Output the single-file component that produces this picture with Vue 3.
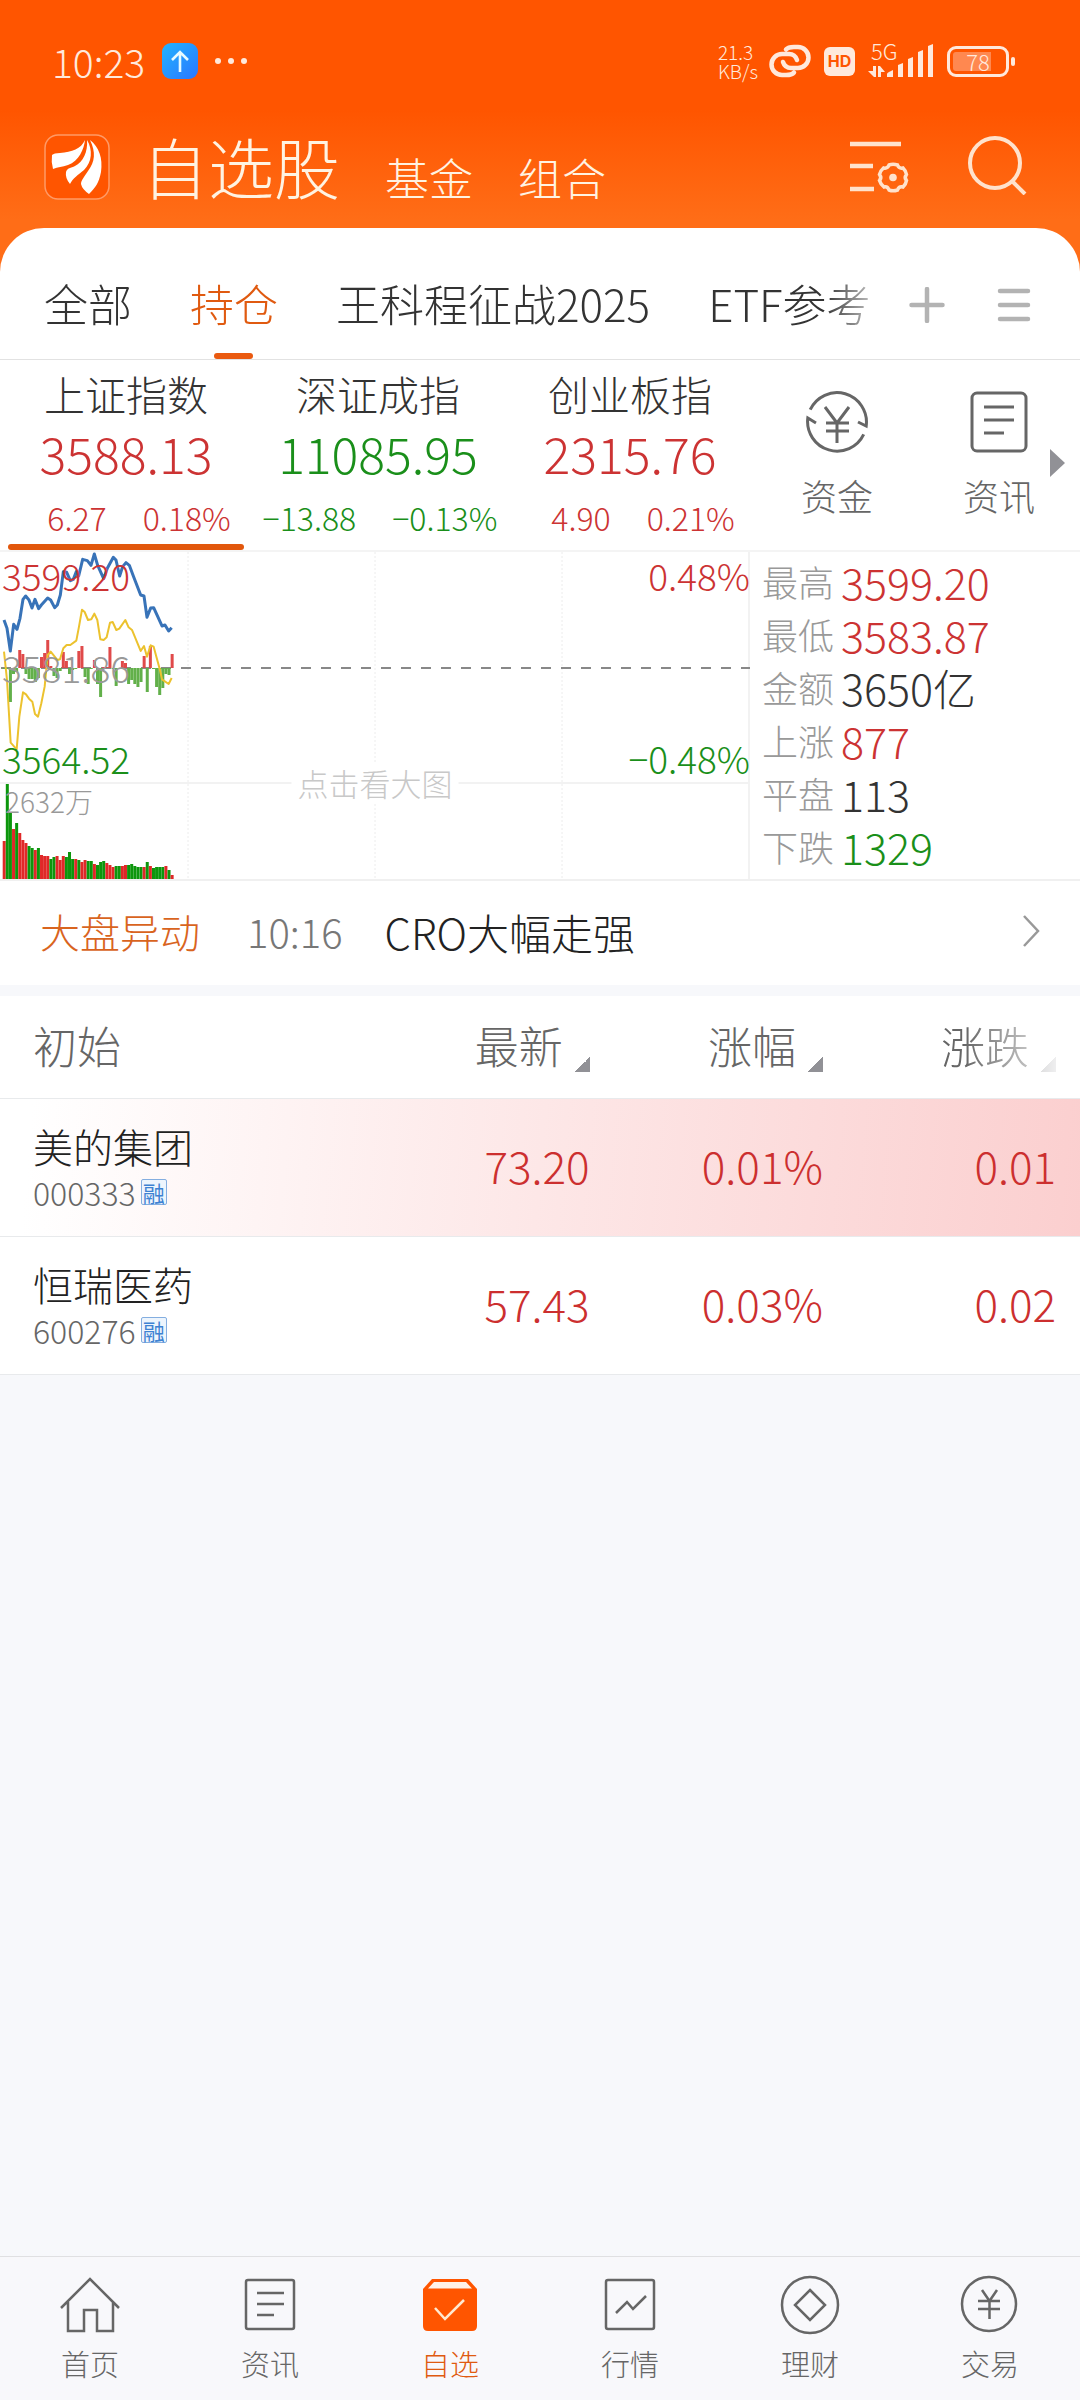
<template>
  <div class="app">
    <header class="top">
      <div class="status">
        <span class="clock">10:23</span>
        <span class="upload">
          <svg viewBox="0 0 36 36" width="36" height="36">
            <path d="M18 29V9M10 17l8-8 8 8" fill="none" stroke="#e8fbff" stroke-width="2.6" />
          </svg>
        </span>
        <span class="dots"><i></i><i></i><i></i></span>
        <span class="speed">21.3<br />KB/s</span>
        <svg class="link" viewBox="0 0 42 34" width="42" height="34">
          <g fill="none" stroke="#ffe9dc" stroke-width="4.5" stroke-linecap="round">
            <path d="M17 5.500Q19 3 25 3H29A10.500 10.500 0 0 1 29 24H22Q16 24 14 18" />
            <path d="M25 28.500Q23 31 17 31H13A10.500 10.500 0 0 1 13 10H20Q26 10 28 16" />
          </g>
        </svg>
        <span class="hd">HD</span>
        <span class="signal">
          <span class="net">5G</span>
          <svg viewBox="0 0 66 34" width="66" height="34">
            <g fill="#ffe9dc">
              <path d="M5 22h3v11H6L0 27h5zM10 33V22h2l5 6h-4v5z" />
              <path d="M19 33v-3q0-1 2-2l4-2v7zM30 21l5-2v14h-5zM40 15l5-2v20h-5zM50 8l5-2v27h-5zM60 2l5-2v33h-5z" />
            </g>
          </svg>
        </span>
        <span class="battery"><span>78</span></span>
      </div>
      <div class="titlebar">
        <svg class="logo" viewBox="0 0 66 66" width="66" height="66">
          <rect x="1" y="1" width="64" height="64" rx="13" fill="#ff5500" stroke="#ff9a66" stroke-width="1.500" />
          <path
            d="M41 6C40 15 35 27 24 31C18 33 14 33 9 35Q7 28 8 21Q10 19 16 19C28 18 37 15 41 6Z"
            fill="#fff"
          />
          <path
            d="M43 6C49 16 48 28 40 36C34 41 29 44 26 50Q21 44 22 38C23 34 27 34 31 32C39 28 44 18 43 6Z"
            fill="#fff"
          />
          <path
            d="M46 6C55 13 59 24 57 38C55 49 51 54 45 60Q38 55 37 50C37 46 41 42 44 37C51 28 52 18 46 6Z"
            fill="#fff"
          />
        </svg>
        <h1>自选股</h1>
        <a href="#fund">基金</a>
        <a href="#group">组合</a>
        <button class="settings" aria-label="列表设置">
          <svg viewBox="0 0 60 56" width="60" height="56">
            <g fill="none" stroke="#ffe2cc" stroke-width="4.500">
              <path d="M0 5H51M0 27H23M0 50H24" />
              <path
                d="M56.500 35.500Q54 38.500 56.500 41.500Q56 45 53 48Q49 47 47.500 51Q43 52.500 39 51Q37.500 47 34 48Q30.500 45 29.500 41.500Q32 38.500 29.500 35.500Q30.500 31.500 33.500 29Q37.500 30 39 26Q43 24.500 47.500 26Q49 30 53 29Q56 32 56.500 35.500Z"
                stroke-width="3.500"
              />
            </g>
            <circle cx="43" cy="38.500" r="3.800" fill="#ffe2cc" />
          </svg>
        </button>
        <button class="search" aria-label="搜索">
          <svg viewBox="0 0 60 60" width="60" height="60">
            <g fill="none" stroke="#ffe2cc" stroke-width="4">
              <circle cx="27" cy="28" r="25" />
              <path d="M44 46L57 59" />
            </g>
          </svg>
        </button>
      </div>
    </header>

    <main>
      <div class="tabs">
        <div class="tab-list">
          <button
            v-for="tab in tabs"
            :key="tab"
            :class="{ active: tab === activeTab }"
            @click="activeTab = tab"
          >
            {{ tab }}
          </button>
        </div>
        <div class="tab-actions">
          <button aria-label="添加">
            <svg viewBox="0 0 36 36" width="36" height="36">
              <path d="M2.500 18H33.500M18 2V34" stroke="#b3b3b3" stroke-width="4.500" stroke-linecap="round" />
            </svg>
          </button>
          <button aria-label="菜单">
            <svg viewBox="0 0 34 36" width="34" height="36">
              <path d="M3 4H31M3 18H31M3 32H31" stroke="#b3b3b3" stroke-width="4.500" stroke-linecap="round" />
            </svg>
          </button>
        </div>
      </div>

      <section class="indices">
        <button
          v-for="item in indices"
          :key="item.name"
          class="index"
          :class="{ active: item.name === activeIndex }"
          @click="activeIndex = item.name"
        >
          <span class="name">{{ item.name }}</span>
          <span class="price" :class="item.dir">{{ item.price }}</span>
          <span class="change" :class="item.dir">
            <span>{{ item.change }}</span>
            <span>{{ item.percent }}</span>
          </span>
        </button>
        <a class="quick" href="#money">
          <svg viewBox="0 0 62 62" width="62" height="62">
            <g fill="none" stroke="#666" stroke-width="3">
              <path d="M4.200 18.700A29.500 29.500 0 0 1 60.200 35L52 31M57.700 43.300A29.500 29.500 0 0 1 1.800 27L10 32" />
              <path d="M19 16L31 32L43 16M31 32V52M20 32H43M20 40H43" />
            </g>
          </svg>
          资金
        </a>
        <a class="quick" href="#news">
          <svg viewBox="0 0 62 62" width="62" height="62">
            <rect x="4" y="2" width="54" height="58" rx="5" fill="none" stroke="#666" stroke-width="3" />
            <path d="M16 16H46M16 29H46M16 42H36" stroke="#666" stroke-width="3" />
          </svg>
          资讯
        </a>
        <i class="more"></i>
      </section>

      <section class="market">
        <div class="chart">
          <svg viewBox="0 0 750 327">
            <g stroke="#f2f2f2" stroke-width="2">
              <path d="M0 231H750M749 0V327" />
            </g>
            <path d="M188 0V327M375 0V327M562 0V327" stroke="#ececec" stroke-dasharray="2 2" />
            <path d="M1 116H750" stroke="#888" stroke-width="2" stroke-dasharray="10 10" />
            <rect
              v-for="(h, i) in momentum"
              :key="'m' + i"
              :x="barX(i)"
              :y="h > 0 ? 116 - h : 116"
              width="3"
              :height="Math.abs(h)"
              :fill="h > 0 ? '#e04a4a' : '#62b04a'"
            />
            <rect
              v-for="(v, i) in volumes"
              :key="'v' + i"
              :x="barX(i)"
              :y="327 - Math.abs(v)"
              width="3"
              :height="Math.abs(v)"
              :fill="v > 0 ? '#e02828' : '#0c960c'"
            />
            <g transform="translate(0 -12) scale(0.3333)" fill="none" stroke-linejoin="round">
              <polyline :points="averageLine" stroke="#ecc22e" stroke-width="6" />
              <polyline :points="priceLine" stroke="#3873b8" stroke-width="9" />
            </g>
          </svg>
          <span class="label high up">3599.20</span>
          <span class="label middle">3581.86</span>
          <span class="label low down">3564.52</span>
          <span class="label high right up">0.48%</span>
          <span class="label low right down">−0.48%</span>
          <span class="label volume">2632万</span>
          <button class="enlarge">点击看大图</button>
        </div>
        <dl class="stats">
          <div v-for="stat in stats" :key="stat.label">
            <dt>{{ stat.label }}</dt>
            <dd :class="stat.dir">{{ stat.value }}</dd>
          </div>
        </dl>
      </section>

      <a class="alert" href="#alert">
        <strong>大盘异动</strong>
        <time>10:16</time>
        <span>CRO大幅走强</span>
        <svg viewBox="0 0 18 32" width="18" height="32">
          <path d="M2 1L16 16L2 31" fill="none" stroke="#999" stroke-width="2.500" />
        </svg>
      </a>

      <table class="stocks">
        <thead>
          <tr>
            <th>初始</th>
            <th v-for="col in columns" :key="col">
              <button>{{ col }}<i></i></button>
            </th>
          </tr>
        </thead>
        <tbody>
          <tr v-for="stock in stocks" :key="stock.code" :class="{ flash: stock.flash }">
            <td>
              <div class="stock-name">{{ stock.name }}</div>
              <div class="stock-code">{{ stock.code }}<span class="badge">融</span></div>
            </td>
            <td>{{ stock.price }}</td>
            <td>{{ stock.percent }}</td>
            <td>{{ stock.change }}</td>
          </tr>
        </tbody>
      </table>
    </main>

    <nav class="bottom">
      <a href="#home">
        <svg viewBox="0 0 60 60" width="60" height="60">
          <path d="M1 33L30 4L59 33M8 27V56H24V35H37V56H53V27" />
        </svg>
        首页
      </a>
      <a href="#news">
        <svg viewBox="0 0 60 60" width="60" height="60">
          <rect x="6" y="5" width="48" height="49" rx="2" />
          <path d="M17 18H44M17 29H44M17 40H34" />
        </svg>
        资讯
      </a>
      <a href="#watchlist" class="active">
        <svg viewBox="0 0 60 60" width="60" height="60">
          <path class="solid" d="M3 14L12 4H48L57 14V51Q57 56 52 56H8Q3 56 3 51Z" />
          <path class="lid" d="M14 7H46L52 13.500H8Z" />
          <path class="tick" d="M15 33L25 44L44 25" />
        </svg>
        自选
      </a>
      <a href="#quotes">
        <svg viewBox="0 0 60 60" width="60" height="60">
          <rect x="6" y="5" width="48" height="49" rx="2" />
          <path d="M16 38L27 27L33 34L46 21" />
        </svg>
        行情
      </a>
      <a href="#wealth">
        <svg viewBox="0 0 60 60" width="60" height="60">
          <circle cx="30" cy="30" r="28" />
          <path d="M30 15L45 30L30 45L15 30Z" />
        </svg>
        理财
      </a>
      <a href="#trade">
        <svg viewBox="0 0 60 60" width="60" height="60">
          <circle cx="29" cy="29" r="27" />
          <path d="M22 15L29.500 26L37 15M29.500 26V44M18 26H40M18 34H40" />
        </svg>
        交易
      </a>
    </nav>
  </div>
</template>

<script setup>
import { ref } from "vue";

const tabs = ["全部", "持仓", "王科程征战2025", "ETF参考"];
const activeTab = ref("持仓");

const indices = [
  { name: "上证指数", price: "3588.13", change: "6.27", percent: "0.18%", dir: "up" },
  { name: "深证成指", price: "11085.95", change: "−13.88", percent: "−0.13%", dir: "down" },
  { name: "创业板指", price: "2315.76", change: "4.90", percent: "0.21%", dir: "up" },
];
const activeIndex = ref("上证指数");

const stats = [
  { label: "最高", value: "3599.20", dir: "up" },
  { label: "最低", value: "3583.87", dir: "up" },
  { label: "金额", value: "3650亿", dir: "" },
  { label: "上涨", value: "877", dir: "up" },
  { label: "平盘", value: "113", dir: "" },
  { label: "下跌", value: "1329", dir: "down" },
];

const columns = ["最新", "涨幅", "涨跌"];
const stocks = [
  { name: "美的集团", code: "000333", price: "73.20", percent: "0.01%", change: "0.01", flash: true },
  { name: "恒瑞医药", code: "600276", price: "57.43", percent: "0.03%", change: "0.02", flash: false },
];

// positive is drawn red, negative green
const momentum = [
  -1, -1, -34, -6, -4, 18, 14, -6, -11, -11, -14, -10, 11, 15, 28, 2, -8, -10, -3, 16, 7, -6, -2,
  -1, 17, 22, -9, -16, -1, 8, -16, -29, 1, 1, 21, -1, -18, -1, 7, 5, -16, -12, -16, -19, -14, 12,
  -24, 22, -1, -19, -27, -20, -6, -7, 14,
];
const volumes = [
  38, -95, -66, 50, -56, 46, 39, 36, -33, -31, 29, -31, 24, 23, 23, -20, -22, 23, 19, 23, -22, -27,
  -20, 20, -19, 17, 19, -18, -18, 15, -14, -17, -18, 16, 14, 12, -13, -13, 13, 14, -14, -15, -13,
  -12, -12, 12, -17, 13, -11, -12, -12, -12, 13, -9, 4,
];
const barX = (i) => (2.7 + i * 3.11).toFixed(2);

const priceLine =
  "12,240 21,265 31,333 41,253 51,268 60,235 69,178 77,168 87,180 96,204 105,178 116,206 124,195 143,174 152,180 164,203 172,195 181,165 190,95 200,97 211,122 220,118 229,95 236,108 248,58 262,62 273,76 283,42 293,76 311,116 322,85 340,52 348,60 359,108 368,80 378,68 388,76 400,108 422,165 432,168 441,232 452,204 461,203 486,258 495,255 506,273 515,263";
const averageLine =
  "12,335 21,420 32,608 50,628 58,530 69,457 78,463 87,476 97,485 105,522 114,530 124,490 134,440 143,345 152,335 172,360 180,358 190,325 200,315 211,315 229,302 237,260 246,209 254,216 264,240 274,238 283,221 292,240 301,298 311,300 320,292 330,248 338,246 349,270 358,266 376,240 386,262 396,270 422,333 432,318 441,350 452,316 461,320 480,390 486,418 506,432 515,414";
</script>

<style>
body {
  margin: 0;
  background: #f7f8fb;
}
</style>

<style scoped>
.app {
  display: flex;
  flex-direction: column;
  min-height: 100vh;
  font-family: "Noto Sans CJK SC", "Noto Sans", sans-serif;
  font-weight: 300;
  color: #333;
  background: #f7f8fb;
}

button {
  padding: 0;
  border: 0;
  background: none;
  font: inherit;
  color: inherit;
  white-space: nowrap;
}

a {
  color: inherit;
  text-decoration: none;
}

svg {
  display: block;
}

.up {
  color: #cc3333;
}

.down {
  color: #1a8f1a;
}

/* header */
.top {
  padding-bottom: 48px;
  margin-bottom: -48px;
  background: linear-gradient(#ff5500 0, #ff5500 110px, #ff6d17 220px);
}

.status {
  display: flex;
  align-items: center;
  height: 122px;
  padding: 0 71px 0 52px;
  color: #ffe9dc;
}

.clock {
  font-size: 39px;
  line-height: 40px;
}

.upload {
  margin-left: 17px;
  border-radius: 9px;
  background: linear-gradient(135deg, #22b4ff, #2a76ff);
}

.dots {
  display: flex;
  gap: 7px;
  margin-left: 17px;
}

.dots i {
  width: 6px;
  height: 6px;
  border-radius: 50%;
  background: #ffe9dc;
}

.speed {
  margin-left: auto;
  font-size: 19px;
  line-height: 19px;
}

.link {
  margin-left: 11px;
}

.hd {
  width: 31px;
  margin-left: 13px;
  border-radius: 6px;
  background: #ffe9dc;
  color: #ff5500;
  font: bold 16px/29px Inter, sans-serif;
  text-align: center;
}

.signal {
  position: relative;
  margin-left: 13px;
}

.net {
  position: absolute;
  top: -6px;
  left: 3px;
  font-size: 22px;
  line-height: 24px;
}

.battery {
  position: relative;
  width: 56px;
  margin-left: 13px;
  border: 3px solid #ffe9dc;
  border-radius: 9px;
  font-size: 22px;
  line-height: 25px;
  text-align: center;
}

.battery::after {
  content: "";
  position: absolute;
  top: 8px;
  right: -9px;
  width: 4px;
  height: 9px;
  border-radius: 2px;
  background: #ffe9dc;
}

.battery span {
  display: block;
  margin: 3px;
  line-height: 19px;
  background: linear-gradient(90deg, #ff8850 76%, transparent 76%);
  border-radius: 3px;
}

.titlebar {
  display: flex;
  align-items: flex-end;
  height: 78px;
  padding: 0 52px 28px 44px;
  color: #fff3e2;
}

.titlebar h1 {
  margin: 0 0 0 32px;
  font-size: 66px;
  font-weight: 300;
  line-height: 70px;
}

.titlebar a {
  margin-left: 45px;
  font-size: 44px;
  line-height: 46px;
}

.titlebar button {
  margin-bottom: 5px;
}

.titlebar .settings {
  margin-left: auto;
}

.titlebar .search {
  margin-left: 58px;
}

/* tabs */
main {
  background: #fff;
  border-radius: 44px 44px 0 0;
}

.tabs {
  display: flex;
  border-bottom: 1px solid #e2e2e2;
}

.tab-list {
  display: flex;
  flex: 1;
  gap: 58px;
  min-width: 0;
  padding-left: 44px;
  overflow: hidden;
  mask-image: linear-gradient(90deg, #000 calc(100% - 52px), rgba(0, 0, 0, 0.25));
}

.tab-list button {
  position: relative;
  padding: 53px 0 34px;
  font-size: 44px;
  line-height: 44px;
}

.tab-list .active {
  color: #e05a10;
}

.tab-list .active::after {
  content: "";
  position: absolute;
  bottom: 0;
  left: 50%;
  width: 39px;
  height: 6px;
  margin-left: -20px;
  border-radius: 3px;
  background: #ea5a10;
}

.tab-actions {
  display: flex;
  padding: 22px 23px 0 7px;
}

.tab-actions button {
  display: flex;
  align-items: center;
  justify-content: center;
  width: 87px;
}

/* indices */
.indices {
  position: relative;
  display: grid;
  grid-template-columns: 252fr 252fr 252fr 162fr 162fr;
  border-bottom: 2px solid #f4f4f4;
}

.index {
  position: relative;
  padding: 10px 0 4px;
  text-align: center;
}

.index span {
  display: block;
}

.index .name {
  font-size: 41px;
  line-height: 46px;
}

.index .price {
  font-size: 50px;
  line-height: 72px;
}

.index .change {
  display: flex;
  justify-content: center;
  gap: 36px;
  padding-left: 26px;
  font-size: 32px;
  line-height: 58px;
}

.index .change.down {
  padding-left: 4px;
}

.index.active::after {
  content: "";
  position: absolute;
  right: 8px;
  bottom: 0;
  left: 8px;
  height: 6px;
  border-radius: 3px;
  background: #e2570c;
}

.quick {
  display: flex;
  flex-direction: column;
  align-items: center;
  gap: 20px;
  padding-top: 31px;
  color: #666;
  font-size: 36px;
  line-height: 44px;
}

.more {
  position: absolute;
  top: 89px;
  right: 15px;
  border: solid transparent;
  border-width: 14px 0 14px 15px;
  border-left-color: #919196;
}

/* chart */
.market {
  display: grid;
  grid-template-columns: 750fr 330fr;
  border-bottom: 2px solid #f0f0f0;
}

.chart {
  position: relative;
}

.chart svg {
  width: 100%;
}

.label {
  position: absolute;
  left: 2px;
  color: #999;
  font-size: 37px;
  line-height: 40px;
}

.label.up {
  color: #cc3333;
}

.label.down {
  color: #1a8f1a;
}

.label.right {
  right: 0;
  left: auto;
}

.high {
  top: 1%;
}

.middle {
  top: 29%;
}

.low {
  top: 57%;
}

.label.volume {
  top: 70%;
  left: 5px;
  font-size: 28px;
}

.enlarge {
  position: absolute;
  top: 211px;
  left: 50%;
  padding: 0 6px;
  background: #fff;
  color: #c8c8c8;
  font-size: 31px;
  line-height: 40px;
  transform: translateX(-50%);
}

.stats {
  display: flex;
  flex-direction: column;
  justify-content: center;
  margin: 0;
  padding: 0 0 4px 12px;
}

.stats div {
  display: flex;
  align-items: center;
  gap: 7px;
  line-height: 53px;
}

.stats dt {
  color: #999;
  font-size: 36px;
}

.stats dd {
  margin: 0;
  font-size: 43px;
}

/* alert */
.alert {
  display: flex;
  align-items: center;
  height: 100px;
  padding: 0 40px 4px;
  border-bottom: 11px solid #f7f8fb;
  font-size: 42px;
}

.alert strong {
  color: #d9641e;
  font-size: 40px;
  font-weight: 300;
}

.alert time {
  margin-left: 47px;
  color: #777;
  font-size: 40px;
}

.alert span {
  margin-left: 42px;
  color: #222;
}

.alert svg {
  margin-left: auto;
}

/* stocks */
.stocks {
  width: 100%;
  border-collapse: collapse;
  table-layout: fixed;
}

.stocks th,
.stocks td {
  box-sizing: border-box;
  width: 21.6%;
  padding: 0 0 4px;
  border-bottom: 1px solid #e8eaec;
  text-align: right;
}

.stocks th {
  height: 102px;
  color: #666;
  font-size: 44px;
  font-weight: 300;
  line-height: 60px;
}

.stocks th:first-child,
.stocks td:first-child {
  width: 33%;
  padding-left: 33px;
  text-align: left;
}

.stocks th:last-child,
.stocks td:last-child {
  width: 23.8%;
  padding-right: 24px;
}

.stocks th button i {
  display: inline-block;
  width: 15px;
  height: 15px;
  margin-left: 12px;
  background: linear-gradient(135deg, transparent 50%, #919196 50%);
  vertical-align: -8px;
}

.stocks th:last-child button {
  mask-image: linear-gradient(90deg, #000 20%, rgba(0, 0, 0, 0.15));
}

.stocks td {
  height: 138px;
  color: #cc2f2f;
  font-size: 44px;
}

.flash {
  background: linear-gradient(95deg, #fff 3%, #fde7e7 50%, #fbcfcf);
}

.stock-name {
  color: #222;
  font-size: 40px;
  line-height: 46px;
}

.stock-code {
  display: flex;
  align-items: center;
  gap: 5px;
  color: #666;
  font-size: 32px;
  line-height: 46px;
}

.stocks td:first-child {
  padding-top: 3px;
  padding-bottom: 0;
}

.badge {
  padding: 0 1px;
  border: 1px solid #84aee0;
  border-radius: 2px;
  background: #edf5fd;
  color: #3d82d2;
  font-size: 22px;
  font-weight: 400;
  line-height: 24px;
}

/* bottom nav */
.bottom {
  display: grid;
  grid-template-columns: repeat(6, 1fr);
  margin-top: auto;
  border-top: 1px solid #e0e0e2;
  background: #f8f8fb;
}

.bottom a {
  display: flex;
  flex-direction: column;
  align-items: center;
  gap: 8px;
  padding: 18px 0 17px;
  color: #666;
  font-size: 29px;
  line-height: 40px;
}

.bottom svg {
  fill: none;
  stroke: #666;
  stroke-width: 2.5;
}

.bottom .active {
  color: #e05a10;
}

.bottom .solid {
  fill: #ff5500;
  stroke: none;
}

.bottom .lid {
  fill: #fff3e8;
  stroke: none;
}

.bottom .tick {
  stroke: #ffe9d0;
}
</style>
